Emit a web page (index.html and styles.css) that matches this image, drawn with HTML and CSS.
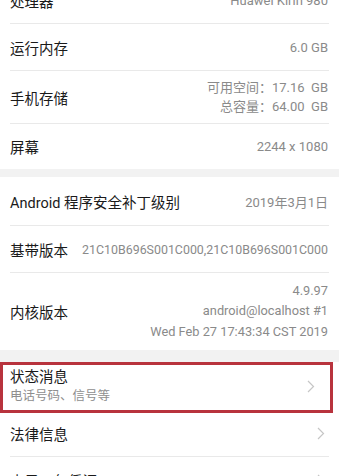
FILE: index.html
```html
<!DOCTYPE html>
<html lang="zh">
<head>
<meta charset="utf-8">
<link rel="stylesheet" href="styles.css">
</head>
<body>
<div class="screen">
  <section class="card first">
    <div class="row r47"><span class="label">处理器</span><span class="value">Huawei Kirin 980</span></div>
    <div class="row r47"><span class="label">运行内存</span><span class="value">6.0 GB</span></div>
    <div class="row r53"><span class="label">手机存储</span><span class="value multi storage"><span>可用空间：17.16  GB</span><span>总容量：64.00  GB</span></span></div>
    <div class="row r45 last"><span class="label">屏幕</span><span class="value">2244 x 1080</span></div>
  </section>
  <div class="gap g8"></div>
  <section class="card">
    <div class="row r49"><span class="label">Android 程序安全补丁级别</span><span class="value">2019年3月1日</span></div>
    <div class="row r47"><span class="label">基带版本</span><span class="value baseband">21C10B696S001C000,21C10B696S001C000</span></div>
    <div class="row r77 last"><span class="label">内核版本</span><span class="value multi kernel"><span>4.9.97</span><span>android@localhost #1</span><span>Wed Feb 27 17:43:34 CST 2019</span></span></div>
  </section>
  <div class="gap g12"></div>
  <section class="card">
    <div class="row r48 link highlighted">
      <span class="stack"><span class="label">状态消息</span><span class="sub">电话号码、信号等</span></span>
      <svg class="chev" width="8" height="13" viewBox="0 0 8 13"><polyline points="1,1 6.5,6.5 1,12" fill="none" stroke="#c6c6c6" stroke-width="1.2"/></svg>
    </div>
    <div class="row r47 link"><span class="label">法律信息</span>
      <svg class="chev" width="8" height="13" viewBox="0 0 8 13"><polyline points="1,1 6.5,6.5 1,12" fill="none" stroke="#c6c6c6" stroke-width="1.2"/></svg>
    </div>
    <div class="row r47 link last"><span class="label">电子三包凭证</span>
      <svg class="chev" width="8" height="13" viewBox="0 0 8 13"><polyline points="1,1 6.5,6.5 1,12" fill="none" stroke="#c6c6c6" stroke-width="1.2"/></svg>
    </div>
  </section>
</div>
</body>
</html>
```
FILE: styles.css
```css
html, body {
  margin: 0;
  padding: 0;
  background: #ffffff;
}
body {
  width: 339px;
  height: 476px;
  overflow: hidden;
  font-family: Roboto, "Noto Sans CJK SC", sans-serif;
  -webkit-font-smoothing: antialiased;
}
.screen {
  margin-top: -23px;
}
.card {
  background: #ffffff;
}
.gap {
  background: #f2f2f2;
}
.g8 { height: 8px; }
.g12 { height: 12px; }
.row {
  display: flex;
  align-items: center;
  justify-content: space-between;
  margin: 0 10px;
  border-bottom: 1px solid #e9e9e9;
  box-sizing: border-box;
  gap: 8px;
}
.row.last { border-bottom: none; }
.r45 { height: 45px; }
.r47 { height: 47px; }
.r48 { height: 48px; }
.r49 { height: 49px; }
.r53 { height: 53px; }
.r77 { height: 77px; }
.label {
  font-size: 14.5px;
  color: #1a1a1a;
  white-space: nowrap;
}
.value {
  font-size: 13px;
  color: #8a8a8a;
  white-space: nowrap;
  margin-right: 1px;
}
.baseband {
  font-size: 12.4px;
}
.multi {
  display: flex;
  flex-direction: column;
  align-items: flex-end;
  white-space: pre;
}
.storage { line-height: 19px; }
.kernel { line-height: 20.5px; font-size: 12.8px; }
.stack {
  display: flex;
  flex-direction: column;
}
.stack .label { line-height: 19px; }
.sub {
  font-size: 12.5px;
  color: #8f8f8f;
  line-height: 18px;
}
.chev {
  margin-right: 4px;
  flex: none;
}
.highlighted {
  position: relative;
  margin: 0;
  padding: 0 10px;
  border-bottom: none;
}
.highlighted::after {
  content: "";
  position: absolute;
  left: 0;
  top: 0;
  width: 333px;
  height: 51px;
  border: 3px solid #b8333d;
  box-sizing: border-box;
}
.highlighted .chev { margin-right: 14px; }
```
